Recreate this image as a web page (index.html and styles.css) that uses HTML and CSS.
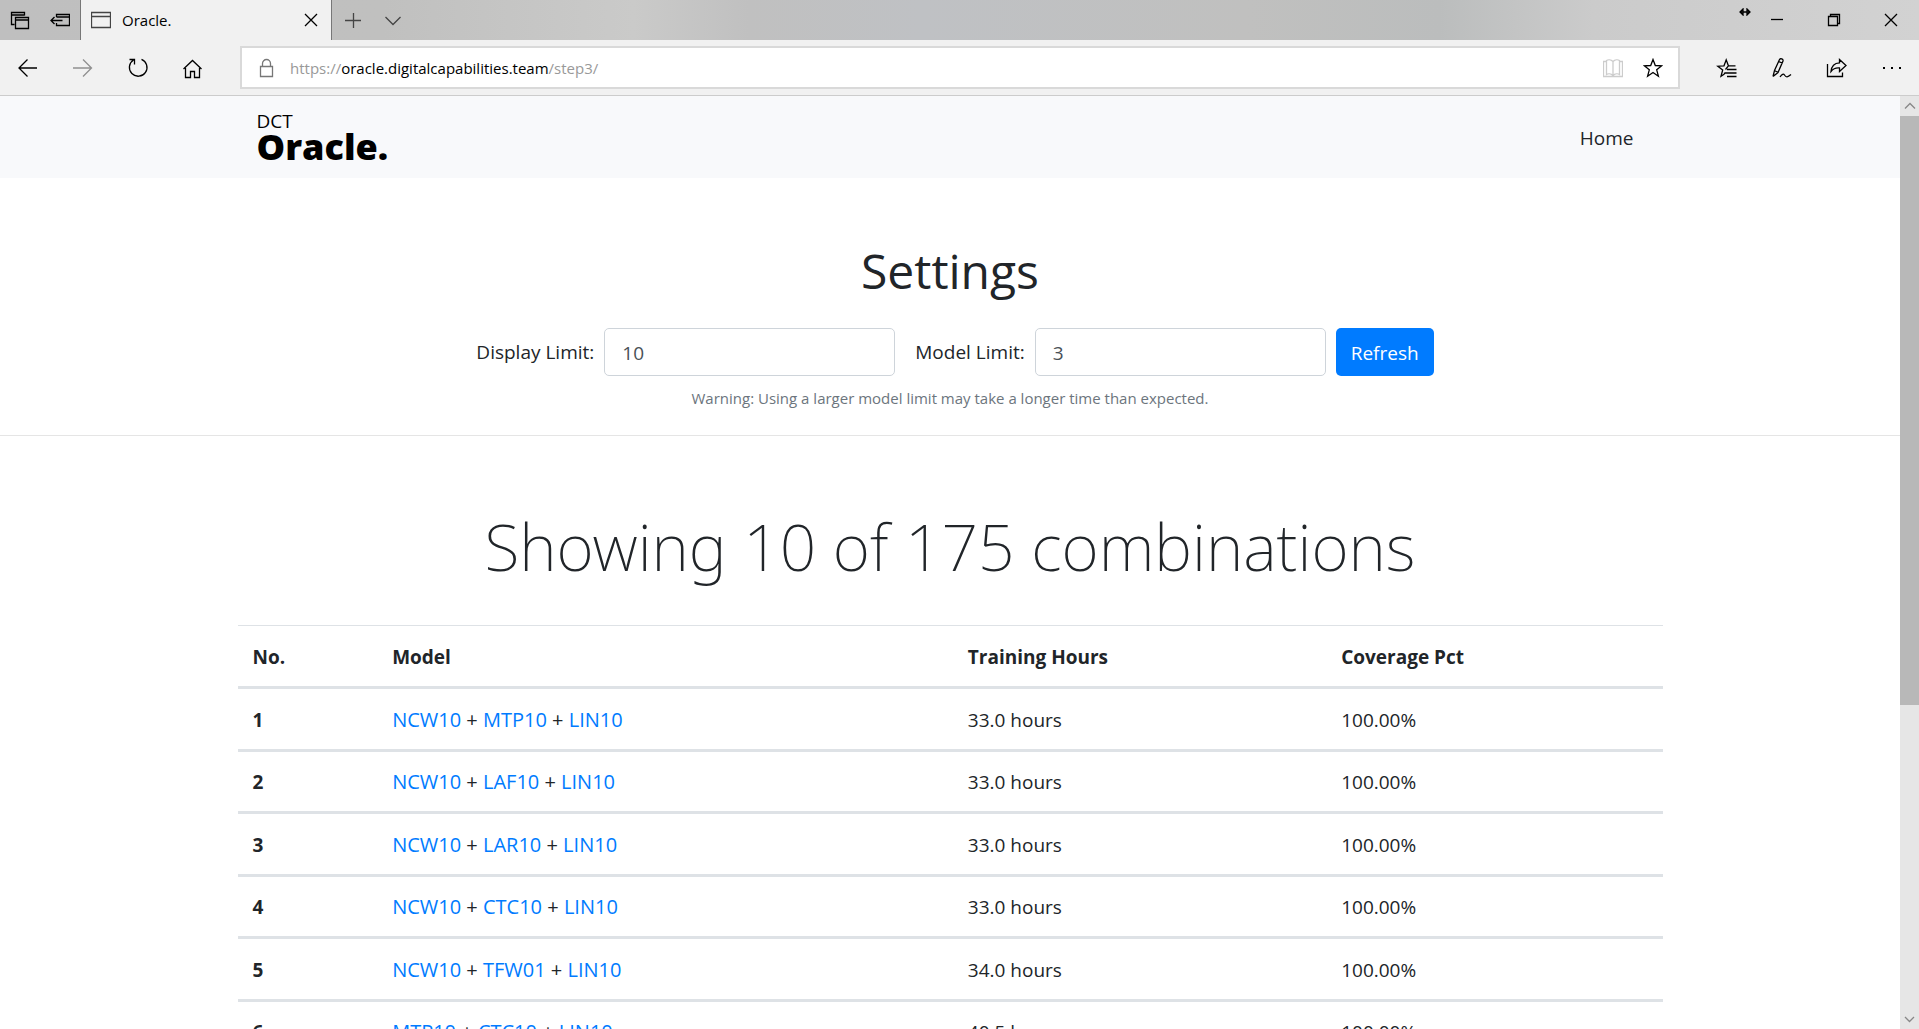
FILE: index.html
```
<!DOCTYPE html>
<html lang="en">
<head>
<meta charset="utf-8">
<title>Oracle.</title>
<link rel="stylesheet" href="styles.css">
</head>
<body>
<header class="titlebar">
  <button class="tab-tool" aria-label="Tabs you've set aside"><svg width="20" height="20" viewBox="0 0 20 20"><path d="M4.500 14.500H1.500V2.500H14.500V5.500M1.500 5H14.500M5.500 7.500H18.500V18.500H5.500ZM5.500 10H18.500"/></svg></button>
  <button class="tab-tool" aria-label="Set these tabs aside"><svg width="20" height="20" viewBox="0 0 20 20"><path d="M6.500 7V4.500H19.500V15.500H6.500V13M6.500 7H19.500M1 10.500H12.500M4.500 7L1 10.500L4.500 14"/></svg></button>
  <div class="tab">
    <svg width="20" height="20" viewBox="0 0 20 20"><path class="dim" d="M.5 2.500H19.500V17.500H.5ZM.5 6.500H19.500"/></svg>
    <span class="tab-title">Oracle.</span>
    <button class="tab-close" aria-label="Close tab"><svg width="14" height="14" viewBox="0 0 14 14"><path d="M1 1L13 13M13 1L1 13"/></svg></button>
  </div>
  <button class="tab-tool tab-new" aria-label="New tab"><svg width="18" height="18" viewBox="0 0 18 18"><path class="dim" d="M1 9.500H17M9.500 2V17"/></svg></button>
  <button class="tab-tool" aria-label="Tab previews"><svg width="18" height="18" viewBox="0 0 18 18"><path class="dim" d="M1.500 6L9 13.500L16.500 6"/></svg></button>
  <div class="window-buttons">
    <svg class="drag-mark" width="12" height="8" viewBox="0 0 12 8"><path d="M1 4H11M4 1L1 4L4 7ZM8 1L11 4L8 7Z" fill="#222"/></svg>
    <button aria-label="Minimize"><svg width="14" height="14" viewBox="0 0 14 14"><path d="M1 6.500H13"/></svg></button>
    <button aria-label="Restore"><svg width="14" height="14" viewBox="0 0 14 14"><path d="M1.500 3.500H10.500V12.500H1.500ZM3.500 3V1.500H12.500V10.500H11"/></svg></button>
    <button aria-label="Close"><svg width="14" height="14" viewBox="0 0 14 14"><path d="M1 1L13 13M13 1L1 13"/></svg></button>
  </div>
</header>

<div class="toolbar">
  <button aria-label="Back"><svg width="22" height="22" viewBox="0 0 22 22"><path d="M20 11H2M10.500 2.500L2 11L10.500 19.500"/></svg></button>
  <button aria-label="Forward" disabled><svg width="22" height="22" viewBox="0 0 22 22"><path d="M1 11H19.500M11 2.500L19.500 11L11 19.500"/></svg></button>
  <button aria-label="Refresh page"><svg width="22" height="22" viewBox="0 0 22 22"><path d="M14.500 2.300A8.800 8.800 0 1 1 6.500 3M2.500 2.500H7.500V7.500"/></svg></button>
  <button aria-label="Home page"><svg width="22" height="22" viewBox="0 0 22 22"><path d="M1.500 12L10.500 3.500L19.500 12M3.500 11V20.500H8.500V14.500H12.500V20.500H17.500V11"/></svg></button>
  <div class="address">
    <svg width="16" height="20" viewBox="0 0 16 20"><path class="gray" d="M1.500 8.500H13.500V18.500H1.500ZM3.500 8.500V5.500A4 4 0 0 1 11.500 5.500V8.500"/></svg>
    <span class="url">https://<b>oracle.digitalcapabilities.team</b>/step3/</span>
    <button aria-label="Reading view" disabled><svg width="20" height="20" viewBox="0 0 20 20"><path class="faint" d="M10 3.500C8 1.500 5 1.500 3.500 2.500V16.500C5 15.500 8 15.500 10 17.500C12 15.500 15 15.500 16.500 16.500V2.500C15 1.500 12 1.500 10 3.500V17.500M3.500 3.500H.5V18.500H19.500V3.500H16.500"/></svg></button>
    <button aria-label="Add to favorites"><svg width="20" height="20" viewBox="0 0 20 20"><path d="M10 1.500L12.300 7.500L18.700 7.800L13.700 11.800L15.400 18.200L10 14.500L4.600 18.200L6.300 11.800L1.300 7.800L7.700 7.500Z"/></svg></button>
  </div>
  <button aria-label="Hub"><svg width="22" height="22" viewBox="0 0 22 22"><path d="M8.500 17L5 19.300L6.700 13L1.800 9.200L8 8.800L10.200 2.800L12.400 8.800H19.500M8.500 17V15.500M11 12.500H20.500M9 16H20.500M11 19.500H20.500M12.400 8.800L9.500 12.500"/></svg></button>
  <button aria-label="Add notes"><svg width="22" height="22" viewBox="0 0 22 22"><path d="M2 19.500L3.500 13.500L8.500 2.500C9.500 1 12.500 2 12 4L7 15.500L2 19.500M3.500 13.500L7 15.500M7.500 4.500L11.500 6.200M9 20C11 17 12.500 16.500 13.500 18C15 20.500 16.500 20.500 20 17.500"/></svg></button>
  <button aria-label="Share"><svg width="22" height="22" viewBox="0 0 22 22"><path d="M1.500 7V19.500H16.500V15.500M13.500 2.500L20 8.500L13.500 14.500V11C9 10.500 7 12 5 14.500C5.500 9 8.500 6 13.500 5.800Z"/></svg></button>
  <button aria-label="More"><svg width="20" height="6" viewBox="0 0 20 6"><path class="dots" d="M1 2H3V4H1ZM9 2H11V4H9ZM17 2H19V4H17Z"/></svg></button>
</div>

<div class="viewport">
  <div class="page">
    <nav class="navbar">
      <div class="container navbar-inner">
        <a class="brand" href="#"><span class="brand-top">DCT</span><span class="brand-name">Oracle.</span></a>
        <a class="nav-link" href="#">Home</a>
      </div>
    </nav>

    <section class="settings">
      <h2>Settings</h2>
      <form class="settings-form">
        <label for="display-limit">Display Limit:</label>
        <input id="display-limit" type="text" value="10">
        <label class="second" for="model-limit">Model Limit:</label>
        <input id="model-limit" type="text" value="3">
        <button type="button">Refresh</button>
      </form>
      <p class="hint">Warning: Using a larger model limit may take a longer time than expected.</p>
    </section>

    <main class="container">
      <h1>Showing 10 of 175 combinations</h1>
      <table>
        <colgroup><col class="col-no"><col class="col-model"><col class="col-hours"><col></colgroup>
        <thead>
          <tr><th scope="col">No.</th><th scope="col">Model</th><th scope="col">Training Hours</th><th scope="col">Coverage Pct</th></tr>
        </thead>
        <tbody>
          <tr><th scope="row">1</th><td class="model"><a href="#">NCW10</a> + <a href="#">MTP10</a> + <a href="#">LIN10</a></td><td>33.0 hours</td><td>100.00%</td></tr>
          <tr><th scope="row">2</th><td class="model"><a href="#">NCW10</a> + <a href="#">LAF10</a> + <a href="#">LIN10</a></td><td>33.0 hours</td><td>100.00%</td></tr>
          <tr><th scope="row">3</th><td class="model"><a href="#">NCW10</a> + <a href="#">LAR10</a> + <a href="#">LIN10</a></td><td>33.0 hours</td><td>100.00%</td></tr>
          <tr><th scope="row">4</th><td class="model"><a href="#">NCW10</a> + <a href="#">CTC10</a> + <a href="#">LIN10</a></td><td>33.0 hours</td><td>100.00%</td></tr>
          <tr><th scope="row">5</th><td class="model"><a href="#">NCW10</a> + <a href="#">TFW01</a> + <a href="#">LIN10</a></td><td>34.0 hours</td><td>100.00%</td></tr>
          <tr><th scope="row">6</th><td class="model"><a href="#">MTP10</a> + <a href="#">CTC10</a> + <a href="#">LIN10</a></td><td>40.5 hours</td><td>100.00%</td></tr>
        </tbody>
      </table>
    </main>
  </div>
  <div class="scrollbar" aria-hidden="true">
    <svg width="19" height="20" viewBox="0 0 19 20"><path d="M5 12.500L10 7.500L15 12.500"/></svg>
    <div class="track"><div class="thumb"></div></div>
    <svg width="19" height="20" viewBox="0 0 19 20"><path d="M5 8L9.500 12.500L14 8"/></svg>
  </div>
</div>
</body>
</html>
```
FILE: styles.css
```
* { box-sizing: border-box; }

body {
  margin: 0;
  height: 100vh;
  display: flex;
  flex-direction: column;
  overflow: hidden;
  background: #fff;
  color: #212529;
  font: 19px/30px "Open Sans", "Noto Sans", sans-serif;
}

a { color: #007bff; text-decoration: none; }

button { font: inherit; border: 0; padding: 0; background: none; }

svg { display: block; flex: none; }
svg path { fill: none; stroke: #000; stroke-width: 1.3; }
svg .dim { stroke: #444; }
svg .gray { stroke: #777; }
svg .faint { stroke: #ccc; }
svg .dots { fill: #000; stroke: none; }

/* Browser title bar */
.titlebar {
  display: flex;
  flex: none;
  height: 40px;
  background: linear-gradient(90deg, #bfbfbf 0%, #c0c0bf 20%, #cacac9 33%, #c0c0c0 39%, #bfc1c4 48%, #c0c0bf 65%, #bbbdbd 75%, #cbcbcb 83%, #d2d2d2 100%);
}
.tab-tool {
  display: flex;
  align-items: center;
  justify-content: center;
  width: 40px;
}
.tab {
  display: flex;
  align-items: center;
  width: 252px;
  padding: 0 13px 0 10px;
  background: #f1f1f1;
  border: solid #777;
  border-width: 0 1px;
}
.tab-title { flex: 1; margin-left: 11px; font-size: 15px; color: #000; }
.tab-new { margin-left: 1px; }
.window-buttons { display: flex; margin-left: auto; }
.window-buttons button {
  display: flex;
  align-items: center;
  justify-content: center;
  width: 57px;
}
.drag-mark { margin: 8px -3px 0 0; }

/* Browser toolbar */
.toolbar {
  display: flex;
  flex: none;
  height: 56px;
  background: #f1f1f1;
  border-bottom: 1px solid #ccc;
}
.toolbar > button {
  display: flex;
  align-items: center;
  justify-content: center;
  width: 55px;
}
.toolbar button:disabled { opacity: .4; }
.toolbar .address button:disabled { opacity: 1; }
.address {
  flex: 1;
  display: flex;
  align-items: center;
  margin: 6px 19px 6px 20px;
  padding: 0 15px 0 17px;
  background: #fff;
  border: 2px solid #d9d9d9;
}
.url { flex: 1; margin-left: 15px; font-size: 15px; color: #999; }
.url b { font-weight: 400; color: #000; }
.address button { margin-left: 20px; }

/* Page area */
.viewport { flex: 1; display: flex; min-height: 0; }
.page { flex: 1; overflow: hidden; }
.container { max-width: 1425px; margin: 0 auto; }

.navbar { background: #f8f9fb; }
.navbar-inner {
  display: flex;
  align-items: center;
  justify-content: space-between;
  height: 82px;
  padding: 2px 19px 0;
}
.brand { display: flex; flex-direction: column; color: #000; }
.brand-top { font-size: 19px; line-height: 18px; }
.brand-name { font-size: 36px; line-height: 34px; font-weight: 800; }
.nav-link { padding: 0 10px; color: #212529; }

.settings {
  padding: 63px 0 24px;
  text-align: center;
  border-bottom: 1px solid #e5e5e5;
}
h2 { margin: 0 0 27px; font-size: 48px; line-height: 60px; font-weight: 400; }
.settings-form {
  display: flex;
  align-items: center;
  justify-content: center;
  gap: 10px;
  padding-left: 10px;
}
.settings-form .second { margin-left: 10px; }
.settings-form input {
  width: 291px;
  height: 48px;
  padding: 1px 17px 0;
  font: inherit;
  color: #495057;
  background: #fff;
  border: 1px solid #ced4da;
  border-radius: 5px;
}
.settings-form button {
  height: 48px;
  padding: 1px 15px 0;
  color: #fff;
  background: #007bff;
  border-radius: 5px;
}
.hint { margin: 9px 0 0; font-size: 15px; line-height: 26px; color: #6c757d; }

h1 {
  margin: 65px 0 32px;
  font: 200 64px/92px "Noto Sans", "Open Sans", sans-serif;
  text-align: center;
}

table { width: 100%; table-layout: fixed; border-spacing: 0; border-top: 1px solid #dee2e6; }
.col-no { width: 9.8%; }
.col-model { width: 40.4%; }
.col-hours { width: 26.2%; }
th, td { height: 63px; padding: 1px 15px 0; text-align: left; border-bottom: 3px solid #dee2e6; }
tr:nth-child(even) > * { height: 62px; }
.model { font-size: 20px; }

/* Scroll bar */
.scrollbar {
  display: flex;
  flex-direction: column;
  width: 19px;
  background: #e6e6e6;
}
.scrollbar path { stroke: #888; }
.track { flex: 1; }
.thumb { height: 66%; background: #b8b8b8; }
```
